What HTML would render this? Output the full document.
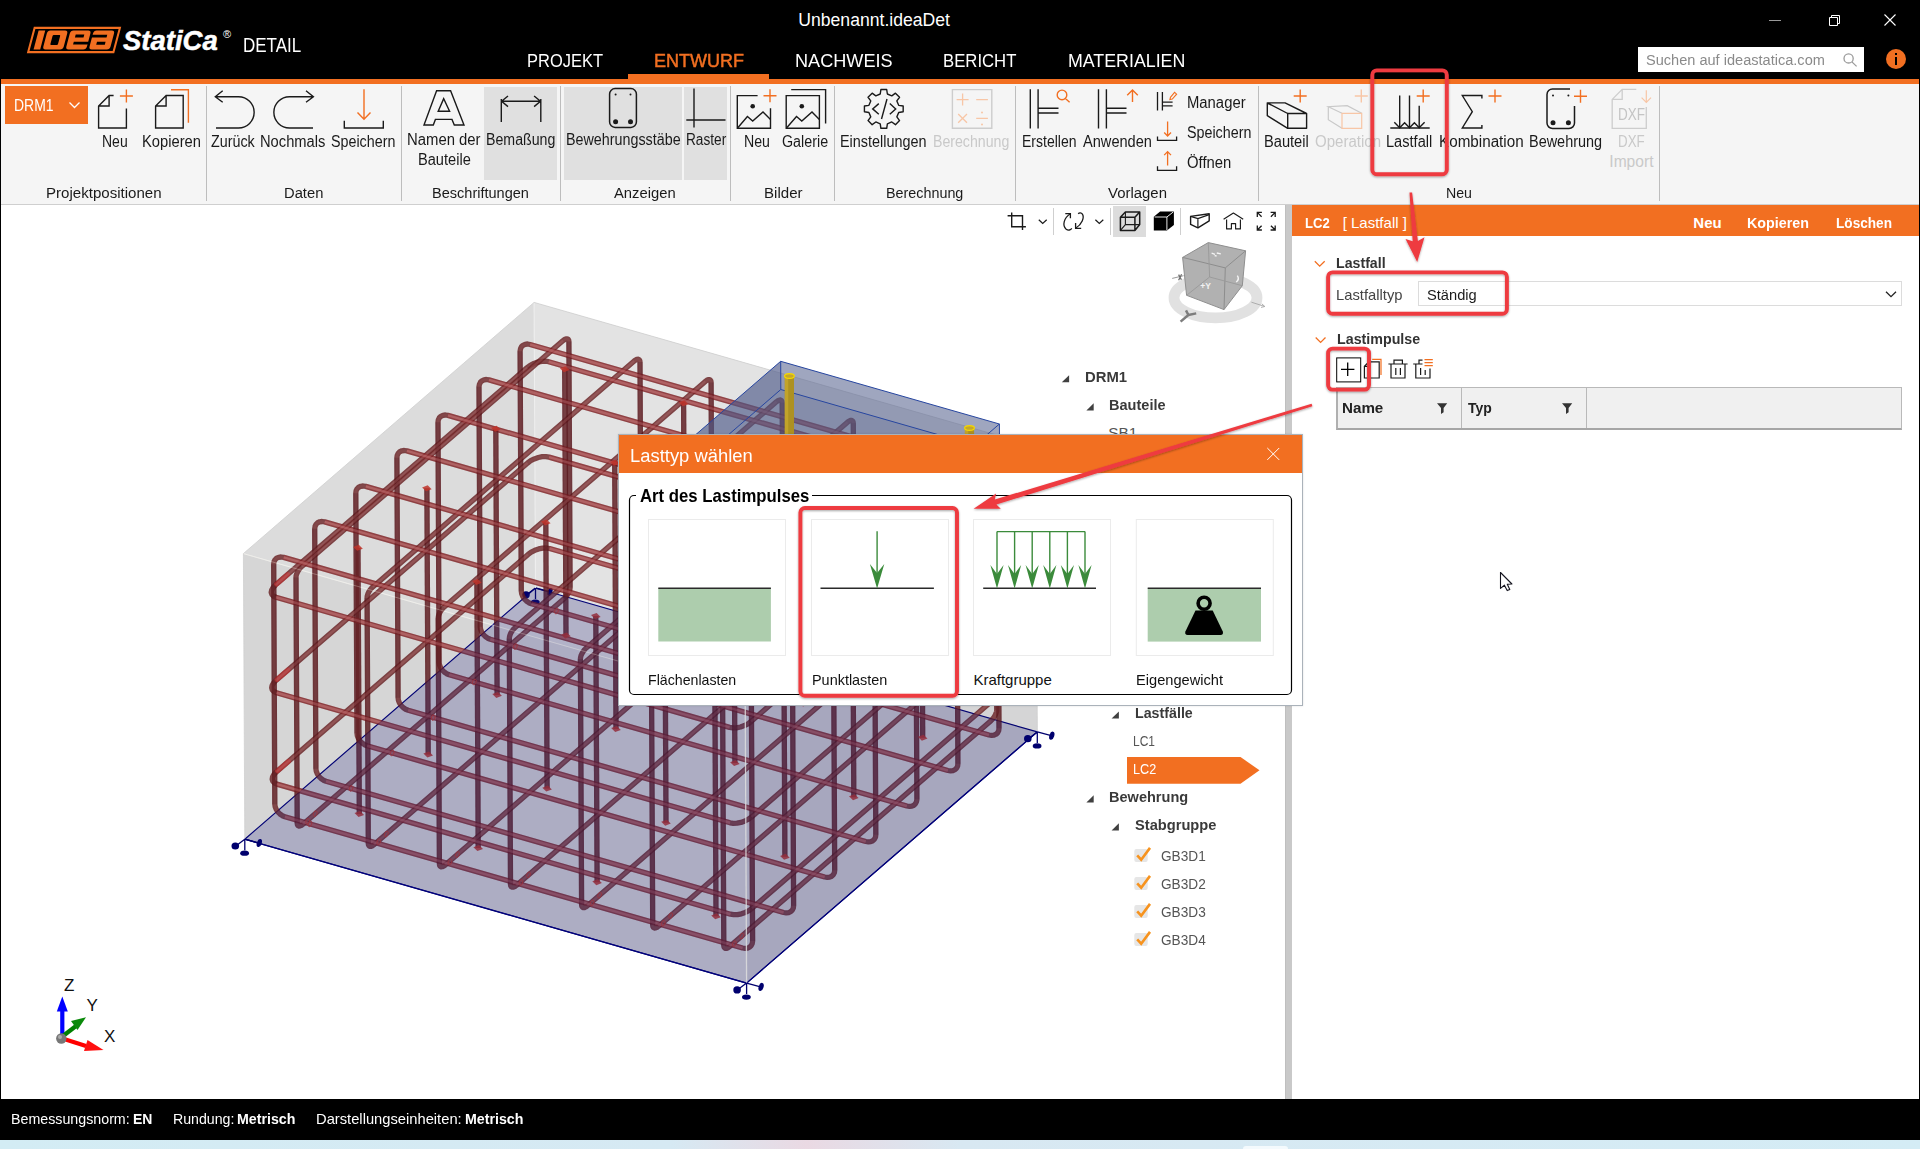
<!DOCTYPE html><html><head><meta charset="utf-8"><title>IDEA StatiCa Detail</title><style>
html,body{margin:0;padding:0;}
body{width:1920px;height:1149px;overflow:hidden;position:relative;background:#fff;
 font-family:"Liberation Sans",sans-serif;color:#1a1a1a;}
.abs{position:absolute;}
.t{position:absolute;white-space:nowrap;line-height:1;}
.c{position:absolute;white-space:nowrap;line-height:1;transform:translateX(-50%);text-align:center;}
svg{position:absolute;overflow:visible;}
.rl{font-size:15.5px;color:#1a1a1a;}
.gl{font-size:15px;color:#1a1a1a;}
.dis{color:#c9c9c9;}
.sep{position:absolute;width:1px;background:#bdbdbd;top:86px;height:115px;}
.b{font-weight:bold;}
.tree{font-size:15.5px;color:#3a3a3a;}
</style></head><body>
<div class="abs" style="left:0;top:0;width:1920px;height:79px;background:#000"></div>
<div class="abs" style="left:0;top:79px;width:1920px;height:5px;background:#f26f21"></div>
<div class="abs" style="left:0;top:84px;width:1920px;height:120px;background:#f5f5f5"></div>
<div class="abs" style="left:0;top:204px;width:1920px;height:1px;background:#cfcfcf"></div>
<div class="abs" style="left:0;top:79px;width:1px;height:1070px;background:#000"></div>
<div class="abs" style="left:1919px;top:79px;width:1px;height:1070px;background:#000"></div>
<div class="abs" style="left:1285px;top:205px;width:7px;height:894px;background:#c9c9c9"></div>
<div class="abs" style="left:1285px;top:205px;width:1px;height:894px;background:#bfbfbf"></div>
<div class="abs" style="left:0;top:1099px;width:1920px;height:41px;background:#000"></div>
<div class="abs" style="left:0;top:1140px;width:1920px;height:9px;background:linear-gradient(90deg,#d3ecf4 0%,#d6e9f3 35%,#ead9e3 42%,#d8e8f2 50%,#d4ecf5 100%)"></div>
<div class="abs" style="left:1243px;top:1146px;width:45px;height:3px;border-radius:3px 3px 0 0;background:#f4fafd"></div>
<svg style="left:0px;top:0px" width="130" height="79" viewBox="0 0 130 79" ><g transform="translate(0,53) skewX(-15) translate(0,-53)"><rect x="27.9" y="27.9" width="85.3" height="24.2" fill="#000" stroke="#f26f21" stroke-width="2.1"/><rect x="32.6" y="30.6" width="6.6" height="18.8" fill="#f26f21"/><rect x="41.6" y="30.6" width="20.4" height="18.8" rx="3" fill="#f26f21"/><rect x="48" y="35" width="7.6" height="10" rx="1" fill="#000"/><rect x="64.6" y="30.6" width="20.6" height="18.8" rx="3" fill="#f26f21"/><rect x="70.8" y="34.6" width="8.6" height="3" fill="#000"/><rect x="70.8" y="41.8" width="15" height="2.8" fill="#000"/><rect x="87.8" y="30.6" width="21" height="18.8" rx="3" fill="#f26f21"/><rect x="87" y="34.8" width="15.4" height="2.8" fill="#000"/><rect x="94" y="41.8" width="8.6" height="3" fill="#000"/></g></svg>
<div class="t" style="left:123.00px;top:27.16px;font-size:27.5px;color:#fff;font-weight:bold;font-style:italic;-webkit-text-stroke:0.5px #fff;">StatiCa</div>
<div class="t" style="left:223.00px;top:29.36px;font-size:11px;color:#fff;">®</div>
<div class="t" style="left:242.70px;top:35.89px;font-size:19.4px;color:#fff;transform:scaleX(0.8769);transform-origin:0 0;">DETAIL</div>
<div class="t" style="left:798.30px;top:11.88px;font-size:17.6px;color:#fff;">Unbenannt.ideaDet</div>
<div class="t" style="left:526.70px;top:51.22px;font-size:19px;color:#fff;transform:scaleX(0.8674);transform-origin:0 0;">PROJEKT</div>
<div class="t" style="left:653.70px;top:51.22px;font-size:19px;color:#f26f21;transform:scaleX(0.9475);transform-origin:0 0;-webkit-text-stroke:0.5px #f26f21;">ENTWURF</div>
<div class="t" style="left:794.70px;top:51.22px;font-size:19px;color:#fff;transform:scaleX(0.9532);transform-origin:0 0;">NACHWEIS</div>
<div class="t" style="left:943.30px;top:51.22px;font-size:19px;color:#fff;transform:scaleX(0.8802);transform-origin:0 0;">BERICHT</div>
<div class="t" style="left:1067.70px;top:51.22px;font-size:19px;color:#fff;transform:scaleX(0.9363);transform-origin:0 0;">MATERIALIEN</div>
<div class="abs" style="left:628px;top:74px;width:141px;height:6px;background:#f26f21"></div>
<div class="abs" style="left:1638px;top:47px;width:226px;height:25px;background:#fff"></div>
<div class="t" style="left:1645.50px;top:52.38px;font-size:15.2px;color:#8a8a8a;transform:scaleX(0.9586);transform-origin:0 0;">Suchen auf ideastatica.com</div>
<svg style="left:1840px;top:50px" width="20" height="20" viewBox="0 0 20 20" ><path d="M13.2 8.4a4.6 4.6 0 1 1-9.2 0a4.6 4.6 0 1 1 9.2 0zM11.9 11.9L16.6 16.4" stroke="#9a9a9a" stroke-width="1.3" fill="none" /></svg>
<div class="abs" style="left:1886px;top:49px;width:20px;height:20px;border-radius:10px;background:#f26f21"></div>
<div class="abs" style="left:1895px;top:56.5px;width:2.4px;height:8px;background:#000"></div>
<div class="abs" style="left:1895px;top:53px;width:2.4px;height:2.4px;background:#000"></div>
<svg style="left:1760px;top:8px" width="150" height="24" viewBox="0 0 150 24" ><path d="M9 12.5H21" stroke="#9a9a9a" stroke-width="1" fill="none" /><path d="M69.5 9.5H77.5V17.5H69.5zM71.5 9.5V7.5H79.5V15.5H77.5" stroke="#fff" stroke-width="1" fill="none" /><path d="M124.5 6.5L135.5 17.5M135.5 6.5L124.5 17.5" stroke="#fff" stroke-width="1.1" fill="none" /></svg>
<div class="abs" style="left:484px;top:87px;width:73px;height:93px;background:#e0e0e0"></div>
<div class="abs" style="left:564px;top:87px;width:118px;height:93px;background:#e0e0e0"></div>
<div class="abs" style="left:684px;top:87px;width:43px;height:93px;background:#e0e0e0"></div>
<div class="sep" style="left:206px"></div>
<div class="sep" style="left:401px"></div>
<div class="sep" style="left:560px"></div>
<div class="sep" style="left:730px"></div>
<div class="sep" style="left:834px"></div>
<div class="sep" style="left:1015px"></div>
<div class="sep" style="left:1258px"></div>
<div class="sep" style="left:1659px"></div>
<div class="abs" style="left:5px;top:86px;width:83px;height:38px;background:#f26f21"></div>
<div class="t" style="left:13.50px;top:97.71px;font-size:16px;color:#fff;transform:scaleX(0.8713);transform-origin:0 0;">DRM1</div>
<svg style="left:0px;top:0px" width="1920" height="210" viewBox="0 0 1920 210" ><path d="M69.5 102.5L74.5 107.5L79.5 102.5" stroke="#fff" stroke-width="1.3" fill="none" /><path d="M113.6 95.5H109.1L98.6 106.0V128H126.4V108.5M109.1 95.5V106.0H98.6" stroke="#1a1a1a" stroke-width="1.4" fill="none" stroke-linejoin="miter"/><path d="M119.9 96H132.9M126.4 89.5V102.5" stroke="#f26f21" stroke-width="1.4" fill="none" /><path d="M166.1 95.5L155.6 106.0V128H183.2V95.5ZM166.1 95.5V106.0H155.6" stroke="#1a1a1a" stroke-width="1.4" fill="none" stroke-linejoin="miter"/><path d="M171 89.8H188.4V122.7" stroke="#f26f21" stroke-width="1.4" fill="none" /><path d="M222.7 90.7L215.3 96.7L222.7 102.3M215.3 96.7H238.5A15.65 15.65 0 0 1 238.5 128H216" stroke="#1a1a1a" stroke-width="1.4" fill="none" /><path d="M306 90.7L313.4 96.7L306 102.3M313.4 96.7H289.5A15.65 15.65 0 0 0 289.5 128H313" stroke="#1a1a1a" stroke-width="1.4" fill="none" /><path d="M344.3 120.7V128H383.3V120.7" stroke="#1a1a1a" stroke-width="1.4" fill="none" /><path d="M364 89.3V119.3M357.5 112.5L364 119.3L370.5 112.5" stroke="#f26f21" stroke-width="1.4" fill="none" /><path d="M436.6 90.7H450.6L464 125H454.3L452 119.4H435.4L433.3 125H424ZM443.7 98.6L438.2 111.2H449.6Z" stroke="#1a1a1a" stroke-width="1.4" fill="none" stroke-linejoin="miter"/><path d="M501.3 99V122M540.8 99V122M501.3 101.3H540.8M508 96L501.6 101.3L508 106.6M534.1 96L540.5 101.3L534.1 106.6" stroke="#1a1a1a" stroke-width="1.4" fill="none" /><rect x="609.6" y="88.6" width="26.8" height="38.8" rx="5.5" fill="none" stroke="#1a1a1a" stroke-width="1.5"/><circle cx="615.6" cy="94.4" r="1" fill="#1a1a1a"/><circle cx="615.6" cy="121.7" r="2.5" fill="#1a1a1a"/><circle cx="630.5" cy="94.4" r="1" fill="#1a1a1a"/><circle cx="630.5" cy="121.7" r="2.5" fill="#1a1a1a"/><path d="M694 88.4V127.4M686.3 120H725.5" stroke="#1a1a1a" stroke-width="1.4" fill="none" /><path d="M757.6 95.6H737.3V128.3H770.5V108.2" stroke="#1a1a1a" stroke-width="1.4" fill="none" /><path d="M737.6 128L747.4 116.5L752.7 121L763 112L770.5 119.5" stroke="#1a1a1a" stroke-width="1.4" fill="none" /><circle cx="752.7" cy="106.2" r="2.3" fill="#1a1a1a"/><path d="M763.5 95.8H776.5M770 89.3V102.3" stroke="#f26f21" stroke-width="1.4" fill="none" /><path d="M786.2 95.6H819.4V128.3H786.2Z" stroke="#1a1a1a" stroke-width="1.4" fill="none" /><path d="M786.5 128L796.5 116.5L801.8 121L812 112L819.4 119.5" stroke="#1a1a1a" stroke-width="1.4" fill="none" /><circle cx="801.8" cy="106.2" r="2.3" fill="#1a1a1a"/><path d="M791.2 89.6H825.6V123.6" stroke="#1a1a1a" stroke-width="1.4" fill="none" /><path d="M880.23 94.02L880.90 89.52L886.70 89.52L887.37 94.02L891.79 95.85L895.46 93.14L899.56 97.24L896.85 100.91L898.68 105.33L903.18 106.00L903.18 111.80L898.68 112.47L896.85 116.89L899.56 120.56L895.46 124.66L891.79 121.95L887.37 123.78L886.70 128.28L880.90 128.28L880.23 123.78L875.81 121.95L872.14 124.66L868.04 120.56L870.75 116.89L868.92 112.47L864.42 111.80L864.42 106.00L868.92 105.33L870.75 100.91L868.04 97.24L872.14 93.14L875.81 95.85Z" stroke="#1a1a1a" stroke-width="1.4" fill="none" stroke-linejoin="round"/><path d="M878.8 103.6L872.7 108.9L878.8 114.2M887 99L881.5 119M889.8 103.6L895.7 108.9L889.8 114.2" stroke="#1a1a1a" stroke-width="1.4" fill="none" /><path d="M952.4 89.6H991.8V128.3H952.4Z" stroke="#cdcdcd" stroke-width="1.4" fill="none" /><path d="M956.6 99.6H968.6M962.6 93.6V105.6M976.2 99.6H987.9M958.2 114L967 122.8M967 114L958.2 122.8M976.2 118.4H987.9" stroke="#f8c6a6" stroke-width="1.3" fill="none" /><circle cx="982" cy="112.4" r="1" fill="#f8c6a6"/><circle cx="982" cy="124.4" r="1" fill="#f8c6a6"/><path d="M1030.3 89.3V128.6M1038.1 89.3V128.6M1038.1 108.2H1058.5M1038.1 113H1058.5" stroke="#1a1a1a" stroke-width="1.4" fill="none" /><path d="M1066.8 94.9a4.8 4.8 0 1 1 -9.6 0a4.8 4.8 0 1 1 9.6 0zM1065.4 98.4L1069.6 102.2" stroke="#f26f21" stroke-width="1.4" fill="none" /><path d="M1098.5 89.3V128.6M1106.4 89.3V128.6M1106.4 108.2H1126.5M1106.4 113H1126.5" stroke="#1a1a1a" stroke-width="1.4" fill="none" /><path d="M1132.5 102.1V89.9M1127.2 95.2L1132.5 89.9L1137.8 95.2" stroke="#f26f21" stroke-width="1.4" fill="none" /><path d="M1157.5 91.9V110.4M1162.4 91.9V110.4M1162.4 102.1H1172.6M1162.4 105.9H1172.6" stroke="#1a1a1a" stroke-width="1.3" fill="none" /><path d="M1170.4 97.4L1174.6 92.4L1176.6 94.2L1172.3 99L1169.9 99.6Z" stroke="#f26f21" stroke-width="1.1" fill="none" /><path d="M1157.5 136.4V140.3H1176.6V136.4" stroke="#1a1a1a" stroke-width="1.3" fill="none" /><path d="M1167.6 121.5V136M1164.2 132.5L1167.6 136L1171 132.5" stroke="#f26f21" stroke-width="1.3" fill="none" /><path d="M1157.5 166.3V170.4H1176.6V166.3" stroke="#1a1a1a" stroke-width="1.3" fill="none" /><path d="M1167.6 165.6V151.6M1164.2 155.1L1167.6 151.6L1171 155.1" stroke="#f26f21" stroke-width="1.3" fill="none" /><path d="M1287.7 113.5H1306.6V128.3H1287.7ZM1287.7 113.5L1267.3 102.9H1285.1L1306.6 113.5M1267.3 102.9V115.7L1287.7 128.3" stroke="#1a1a1a" stroke-width="1.4" fill="none" stroke-linejoin="round"/><path d="M1293.7 96H1306.7M1300.2 89.5V102.5" stroke="#f26f21" stroke-width="1.4" fill="none" /><path d="M1342 113.3L1328.3 106.7L1347.2 105.6L1361.7 113.3M1328.3 106.7V119.7L1342 128.3" stroke="#c9c9c9" stroke-width="1.2" fill="none" /><path d="M1342 113.3H1361.7V128.3H1342Z" stroke="#f8c6a6" stroke-width="1.2" fill="none" /><path d="M1354.8 96H1367.8M1361.3 89.5V102.5" stroke="#f8c6a6" stroke-width="1.4" fill="none" /><path d="M1399.7 95.5V128M1409.5 95.5V128M1419.2 105.7V128M1390.3 128H1429.7" stroke="#1a1a1a" stroke-width="1.4" fill="none" /><path d="M1394.3 122.3L1399.7 127.8L1404.6 122.8L1409.5 127.8L1414.4 122.8L1419.2 127.8L1424.6 122.3" stroke="#1a1a1a" stroke-width="1.4" fill="none" stroke-linejoin="miter"/><path d="M1416.7 96H1429.7M1423.2 89.5V102.5" stroke="#f26f21" stroke-width="1.4" fill="none" /><path d="M1481.9 98.6V95.5H1462.3L1472.3 111.7L1462.3 128H1481.9V124.9" stroke="#1a1a1a" stroke-width="1.4" fill="none" stroke-linejoin="miter"/><path d="M1488.5 96H1501.5M1495 89.5V102.5" stroke="#f26f21" stroke-width="1.4" fill="none" /><path d="M1570 88.9H1552.5A5.5 5.5 0 0 0 1547 94.4V123A5.5 5.5 0 0 0 1552.5 128.5H1569A5.5 5.5 0 0 0 1574.5 123V106" stroke="#1a1a1a" stroke-width="1.5" fill="none" /><circle cx="1553" cy="95.5" r="1" fill="#1a1a1a"/><circle cx="1553" cy="122.7" r="2.5" fill="#1a1a1a"/><circle cx="1568.4" cy="95.5" r="1" fill="#1a1a1a"/><circle cx="1568.4" cy="122.7" r="2.5" fill="#1a1a1a"/><path d="M1574.0 96.3H1587.0M1580.5 89.8V102.8" stroke="#f26f21" stroke-width="1.4" fill="none" /><path d="M1636.3 89.4H1622.2L1612.2 99.4V128.3H1646.3V107M1622.2 89.4V99.4H1612.2" stroke="#cdcdcd" stroke-width="1.3" fill="none" /><path d="M1646.3 90.2V102.3M1641.6 97.6L1646.3 102.3L1651 97.6" stroke="#f8c6a6" stroke-width="1.2" fill="none" /></svg>
<div class="t" style="left:1617.50px;top:106.18px;font-size:17px;color:#c4c4c4;transform:scaleX(0.7941);transform-origin:0 0;">DXF</div>
<div class="t" style="left:102.30px;top:133.74px;font-size:15.6px;color:#1a1a1a;transform:scaleX(0.8979);transform-origin:0 0;">Neu</div>
<div class="t" style="left:141.70px;top:133.74px;font-size:15.6px;color:#1a1a1a;transform:scaleX(0.9447);transform-origin:0 0;">Kopieren</div>
<div class="t" style="left:211.30px;top:133.74px;font-size:15.6px;color:#1a1a1a;transform:scaleX(0.9166);transform-origin:0 0;">Zurück</div>
<div class="t" style="left:260.30px;top:133.74px;font-size:15.6px;color:#1a1a1a;transform:scaleX(0.9429);transform-origin:0 0;">Nochmals</div>
<div class="t" style="left:331.30px;top:133.74px;font-size:15.6px;color:#1a1a1a;transform:scaleX(0.9167);transform-origin:0 0;">Speichern</div>
<div class="t" style="left:407.40px;top:131.94px;font-size:15.6px;color:#1a1a1a;transform:scaleX(0.9537);transform-origin:0 0;">Namen der</div>
<div class="t" style="left:417.70px;top:151.74px;font-size:15.6px;color:#1a1a1a;transform:scaleX(0.9365);transform-origin:0 0;">Bauteile</div>
<div class="t" style="left:485.90px;top:131.94px;font-size:15.6px;color:#1a1a1a;transform:scaleX(0.9094);transform-origin:0 0;">Bemaßung</div>
<div class="t" style="left:565.60px;top:131.94px;font-size:15.6px;color:#1a1a1a;transform:scaleX(0.9184);transform-origin:0 0;">Bewehrungsstäbe</div>
<div class="t" style="left:685.60px;top:131.94px;font-size:15.6px;color:#1a1a1a;transform:scaleX(0.8749);transform-origin:0 0;">Raster</div>
<div class="t" style="left:743.60px;top:133.74px;font-size:15.6px;color:#1a1a1a;transform:scaleX(0.9084);transform-origin:0 0;">Neu</div>
<div class="t" style="left:782.40px;top:133.74px;font-size:15.6px;color:#1a1a1a;transform:scaleX(0.9167);transform-origin:0 0;">Galerie</div>
<div class="t" style="left:839.80px;top:133.74px;font-size:15.6px;color:#1a1a1a;transform:scaleX(0.9244);transform-origin:0 0;">Einstellungen</div>
<div class="t" style="left:933.20px;top:133.74px;font-size:15.6px;color:#c9c9c9;transform:scaleX(0.9069);transform-origin:0 0;">Berechnung</div>
<div class="t" style="left:1021.80px;top:133.74px;font-size:15.6px;color:#1a1a1a;transform:scaleX(0.8979);transform-origin:0 0;">Erstellen</div>
<div class="t" style="left:1082.70px;top:133.74px;font-size:15.6px;color:#1a1a1a;transform:scaleX(0.9358);transform-origin:0 0;">Anwenden</div>
<div class="t" style="left:1187.20px;top:94.64px;font-size:15.6px;color:#1a1a1a;transform:scaleX(0.9518);transform-origin:0 0;">Manager</div>
<div class="t" style="left:1187.20px;top:124.74px;font-size:15.6px;color:#1a1a1a;transform:scaleX(0.9167);transform-origin:0 0;">Speichern</div>
<div class="t" style="left:1187.20px;top:154.64px;font-size:15.6px;color:#1a1a1a;transform:scaleX(0.9518);transform-origin:0 0;">Öffnen</div>
<div class="t" style="left:1263.50px;top:133.74px;font-size:15.6px;color:#1a1a1a;transform:scaleX(0.9391);transform-origin:0 0;">Bauteil</div>
<div class="t" style="left:1314.50px;top:133.74px;font-size:15.6px;color:#c9c9c9;transform:scaleX(0.9648);transform-origin:0 0;">Operation</div>
<div class="t" style="left:1386.00px;top:133.74px;font-size:15.6px;color:#1a1a1a;transform:scaleX(0.9367);transform-origin:0 0;">Lastfall</div>
<div class="t" style="left:1438.80px;top:133.74px;font-size:15.6px;color:#1a1a1a;transform:scaleX(0.9766);transform-origin:0 0;">Kombination</div>
<div class="t" style="left:1529.30px;top:133.74px;font-size:15.6px;color:#1a1a1a;transform:scaleX(0.9262);transform-origin:0 0;">Bewehrung</div>
<div class="t" style="left:1618.30px;top:133.74px;font-size:15.6px;color:#c9c9c9;transform:scaleX(0.8557);transform-origin:0 0;">DXF</div>
<div class="t" style="left:1609.30px;top:153.64px;font-size:15.6px;color:#c9c9c9;">Import</div>
<div class="t" style="left:46.00px;top:185.08px;font-size:15.2px;color:#1a1a1a;transform:scaleX(0.9923);transform-origin:0 0;">Projektpositionen</div>
<div class="t" style="left:284.30px;top:185.08px;font-size:15.2px;color:#1a1a1a;transform:scaleX(0.9714);transform-origin:0 0;">Daten</div>
<div class="t" style="left:432.30px;top:185.08px;font-size:15.2px;color:#1a1a1a;transform:scaleX(0.9567);transform-origin:0 0;">Beschriftungen</div>
<div class="t" style="left:614.30px;top:185.08px;font-size:15.2px;color:#1a1a1a;transform:scaleX(0.9735);transform-origin:0 0;">Anzeigen</div>
<div class="t" style="left:763.70px;top:185.08px;font-size:15.2px;color:#1a1a1a;transform:scaleX(0.9934);transform-origin:0 0;">Bilder</div>
<div class="t" style="left:886.30px;top:185.08px;font-size:15.2px;color:#1a1a1a;transform:scaleX(0.9443);transform-origin:0 0;">Berechnung</div>
<div class="t" style="left:1107.70px;top:185.08px;font-size:15.2px;color:#1a1a1a;transform:scaleX(0.9833);transform-origin:0 0;">Vorlagen</div>
<div class="t" style="left:1445.70px;top:185.08px;font-size:15.2px;color:#1a1a1a;transform:scaleX(0.9325);transform-origin:0 0;">Neu</div>
<svg style="left:0px;top:0px" width="1284" height="1099" viewBox="0 0 1284 1099" ><path d="M243.4 553.6L534.1 302.4L1035.9 446.3L1037.3 731.9L746.6 983.1L244.8 839.2Z" fill="#dcdcdc" stroke="none" stroke-width="1" /><path d="M534.1 302.4L1035.9 446.3L1037.3 731.9L535.5 588.0Z" fill="#e3e3e3" stroke="none" stroke-width="1" /><path d="M244.8 839.2L746.6 983.1L1037.3 731.9L535.5 588.0Z" fill="#e9e9e9" stroke="#00007a" stroke-width="1.2" stroke-linejoin="round"/><path d="M535.5 588.0V599.0M535.5 588.0L527.5 594.0M535.5 588.0L548.5 591.5" stroke="#00006e" stroke-width="1.3" fill="none" /><ellipse cx="526.0" cy="594.8" rx="3.8" ry="3.6" fill="#00006e"/><ellipse cx="535.3" cy="602.0" rx="4.4" ry="2.6" fill="#00006e"/><ellipse cx="550.0" cy="591.8" rx="2.4" ry="4.2" fill="#00006e" transform="rotate(18 550.0 591.8)"/><path d="M244.8 839.2L746.6 983.1L745.2 697.5L243.4 553.6Z" fill="rgba(0,0,0,0.022)" stroke="none" stroke-width="1" /><path d="M746.6 983.1L1037.3 731.9L1035.9 446.3L745.2 697.5Z" fill="rgba(0,0,20,0.06)" stroke="none" stroke-width="1" /><path d="M243.4 553.6L745.2 697.5" stroke="rgba(255,255,255,0.6)" stroke-width="1" fill="none" /><path d="M745.2 697.5L1035.9 446.3" stroke="rgba(255,255,255,0.6)" stroke-width="1" fill="none" /><path d="M535.5 588.0L534.1 302.4" stroke="rgba(240,240,240,0.9)" stroke-width="1.1" fill="none" /><path d="M243.4 553.6L534.1 302.4" stroke="#cfcfcf" stroke-width="0.8" fill="none" /><path d="M534.1 302.4L1035.9 446.3" stroke="#cfcfcf" stroke-width="0.8" fill="none" /><path d="M244.8 839.2L243.4 553.6" stroke="#cfcfcf" stroke-width="0.8" fill="none" /><path d="M1037.3 731.9L1035.9 446.3" stroke="#cfcfcf" stroke-width="0.8" fill="none" /><path d="M274.8 804.2L275.2 806.8L276.2 809.4L277.8 811.9L279.9 814.0L282.3 815.7L284.9 816.7L742.6 948.0L745.2 948.4L747.6 948.1L749.6 947.2L751.2 945.6L752.2 943.6L752.6 941.1L751.4 701.2L751.0 698.6L750.0 696.0L748.4 693.5L746.3 691.4L743.9 689.7L741.3 688.7L283.7 557.4L281.1 557.0L278.6 557.3L276.6 558.2L275.0 559.8L274.0 561.8L273.7 564.3Z" fill="none" stroke="rgba(100,28,30,0.8)" stroke-width="5.3" stroke-linejoin="round" stroke-linecap="butt"/><path d="M315.9 768.7L316.3 771.3L317.3 773.9L318.9 776.4L321.0 778.5L323.4 780.2L326.0 781.2L783.6 912.5L786.2 912.9L788.7 912.6L790.7 911.7L792.3 910.1L793.3 908.1L793.6 905.7L792.5 665.8L792.1 663.1L791.1 660.5L789.5 658.0L787.4 655.9L785.0 654.2L782.4 653.2L324.7 521.9L322.1 521.5L319.7 521.8L317.6 522.7L316.1 524.3L315.1 526.3L314.7 528.8Z" fill="none" stroke="rgba(100,28,30,0.8)" stroke-width="5.3" stroke-linejoin="round" stroke-linecap="butt"/><path d="M357.0 733.2L357.3 735.8L358.4 738.4L360.0 740.9L362.1 743.0L364.5 744.7L367.1 745.8L824.7 877.0L827.3 877.4L829.7 877.1L831.8 876.2L833.4 874.6L834.4 872.6L834.7 870.2L833.5 630.3L833.2 627.6L832.2 625.0L830.6 622.5L828.5 620.4L826.0 618.7L823.4 617.7L365.8 486.4L363.2 486.0L360.8 486.3L358.7 487.2L357.1 488.8L356.1 490.8L355.8 493.3Z" fill="none" stroke="rgba(100,28,30,0.8)" stroke-width="5.3" stroke-linejoin="round" stroke-linecap="butt"/><path d="M398.1 697.7L398.4 700.3L399.4 702.9L401.0 705.4L403.1 707.5L405.6 709.2L408.2 710.3L865.8 841.5L868.4 841.9L870.8 841.6L872.9 840.7L874.5 839.1L875.5 837.1L875.8 834.7L874.6 594.8L874.3 592.1L873.2 589.5L871.6 587.1L869.5 584.9L867.1 583.2L864.5 582.2L406.9 450.9L404.3 450.5L401.9 450.8L399.8 451.7L398.2 453.3L397.2 455.4L396.9 457.8Z" fill="none" stroke="rgba(100,28,30,0.8)" stroke-width="5.3" stroke-linejoin="round" stroke-linecap="butt"/><path d="M439.1 662.2L439.5 664.8L440.5 667.4L442.1 669.9L444.2 672.0L446.6 673.7L449.2 674.8L906.9 806.0L909.5 806.4L911.9 806.1L914.0 805.2L915.5 803.6L916.5 801.6L916.9 799.2L915.7 559.3L915.3 556.7L914.3 554.0L912.7 551.6L910.6 549.4L908.2 547.8L905.6 546.7L448.0 415.4L445.4 415.0L442.9 415.3L440.9 416.3L439.3 417.8L438.3 419.9L438.0 422.3Z" fill="none" stroke="rgba(100,28,30,0.8)" stroke-width="5.3" stroke-linejoin="round" stroke-linecap="butt"/><path d="M480.2 626.7L480.6 629.3L481.6 631.9L483.2 634.4L485.3 636.5L487.7 638.2L490.3 639.3L947.9 770.5L950.5 770.9L953.0 770.6L955.0 769.7L956.6 768.1L957.6 766.1L957.9 763.7L956.8 523.8L956.4 521.2L955.4 518.5L953.8 516.1L951.7 513.9L949.3 512.3L946.7 511.2L489.0 379.9L486.4 379.5L484.0 379.8L482.0 380.8L480.4 382.3L479.4 384.4L479.0 386.8Z" fill="none" stroke="rgba(100,28,30,0.8)" stroke-width="5.3" stroke-linejoin="round" stroke-linecap="butt"/><path d="M521.3 591.2L521.7 593.8L522.7 596.4L524.3 598.9L526.4 601.0L528.8 602.7L531.4 603.8L989.0 735.0L991.6 735.4L994.0 735.2L996.1 734.2L997.7 732.7L998.7 730.6L999.0 728.2L997.8 488.3L997.5 485.7L996.5 483.0L994.9 480.6L992.8 478.4L990.4 476.8L987.8 475.7L530.1 344.5L527.5 344.0L525.1 344.3L523.0 345.3L521.4 346.8L520.5 348.9L520.1 351.3Z" fill="none" stroke="rgba(100,28,30,0.8)" stroke-width="5.3" stroke-linejoin="round" stroke-linecap="butt"/><path d="M297.2 823.2L297.4 824.6L297.9 825.6L298.9 826.0L300.1 825.9L301.5 825.3L303.0 824.2L564.3 598.4L565.8 596.9L567.2 595.1L568.4 593.1L569.4 591.0L569.9 589.1L570.1 587.4L568.9 341.6L568.7 340.2L568.1 339.3L567.2 338.8L566.0 338.9L564.6 339.5L563.1 340.6L301.7 566.5L300.2 568.0L298.8 569.8L297.6 571.8L296.7 573.8L296.1 575.8L296.0 577.5Z" fill="none" stroke="rgba(100,28,30,0.8)" stroke-width="5.3" stroke-linejoin="round" stroke-linecap="butt"/><path d="M368.3 843.6L368.5 845.0L369.1 846.0L370.0 846.4L371.2 846.3L372.6 845.7L374.1 844.6L635.4 618.8L636.9 617.3L638.3 615.5L639.5 613.5L640.5 611.4L641.0 609.5L641.2 607.8L640.0 362.0L639.8 360.6L639.2 359.7L638.3 359.2L637.1 359.3L635.7 359.9L634.2 361.0L372.8 586.9L371.3 588.4L369.9 590.2L368.7 592.2L367.8 594.2L367.2 596.2L367.1 597.9Z" fill="none" stroke="rgba(100,28,30,0.8)" stroke-width="5.3" stroke-linejoin="round" stroke-linecap="butt"/><path d="M439.4 864.0L439.6 865.4L440.2 866.4L441.1 866.8L442.3 866.7L443.7 866.1L445.2 865.0L706.5 639.2L708.1 637.7L709.5 635.9L710.7 633.9L711.6 631.8L712.1 629.9L712.3 628.2L711.1 382.4L710.9 381.0L710.3 380.1L709.4 379.6L708.2 379.7L706.8 380.3L705.3 381.4L443.9 607.2L442.4 608.8L441.0 610.6L439.8 612.6L438.9 614.6L438.4 616.5L438.2 618.3Z" fill="none" stroke="rgba(100,28,30,0.8)" stroke-width="5.3" stroke-linejoin="round" stroke-linecap="butt"/><path d="M510.5 884.4L510.7 885.8L511.3 886.7L512.2 887.2L513.4 887.1L514.8 886.5L516.3 885.4L777.7 659.6L779.2 658.1L780.6 656.2L781.8 654.3L782.7 652.2L783.2 650.3L783.4 648.5L782.2 402.8L782.0 401.4L781.4 400.5L780.5 400.0L779.3 400.1L777.9 400.7L776.4 401.8L515.1 627.6L513.5 629.1L512.1 631.0L510.9 632.9L510.0 635.0L509.5 636.9L509.3 638.7Z" fill="none" stroke="rgba(100,28,30,0.8)" stroke-width="5.3" stroke-linejoin="round" stroke-linecap="butt"/><path d="M581.6 904.8L581.8 906.2L582.4 907.1L583.3 907.6L584.5 907.5L585.9 906.9L587.4 905.8L848.8 680.0L850.3 678.5L851.7 676.6L852.9 674.6L853.8 672.6L854.4 670.7L854.5 668.9L853.3 423.2L853.1 421.8L852.5 420.8L851.6 420.4L850.4 420.5L849.0 421.1L847.5 422.2L586.2 648.0L584.7 649.5L583.3 651.3L582.1 653.3L581.1 655.4L580.6 657.3L580.4 659.1Z" fill="none" stroke="rgba(100,28,30,0.8)" stroke-width="5.3" stroke-linejoin="round" stroke-linecap="butt"/><path d="M652.7 925.2L652.9 926.6L653.5 927.5L654.4 928.0L655.6 927.9L657.0 927.3L658.5 926.2L919.9 700.3L921.4 698.8L922.8 697.0L924.0 695.0L924.9 693.0L925.5 691.0L925.6 689.3L924.4 443.6L924.2 442.2L923.6 441.2L922.7 440.8L921.5 440.9L920.1 441.5L918.6 442.6L657.3 668.4L655.8 669.9L654.4 671.7L653.2 673.7L652.2 675.8L651.7 677.7L651.5 679.4Z" fill="none" stroke="rgba(100,28,30,0.8)" stroke-width="5.3" stroke-linejoin="round" stroke-linecap="butt"/><path d="M723.8 945.6L724.0 947.0L724.6 947.9L725.5 948.4L726.7 948.3L728.1 947.7L729.6 946.6L991.0 720.7L992.5 719.2L993.9 717.4L995.1 715.4L996.0 713.4L996.6 711.4L996.8 709.7L995.5 464.0L995.3 462.6L994.8 461.6L993.8 461.2L992.6 461.3L991.2 461.9L989.7 463.0L728.4 688.8L726.9 690.3L725.5 692.1L724.3 694.1L723.3 696.2L722.8 698.1L722.6 699.8Z" fill="none" stroke="rgba(100,28,30,0.8)" stroke-width="5.3" stroke-linejoin="round" stroke-linecap="butt"/><path d="M276.3 771.9L274.0 774.4L272.6 776.8L272.2 779.2L272.8 781.3L274.4 783.0L276.9 784.1L730.5 914.2L733.7 914.7L737.5 914.6L741.4 913.8L745.3 912.4L748.9 910.6L752.0 908.3L1003.8 690.8L1006.1 688.3L1007.5 685.8L1007.9 683.5L1007.3 681.4L1005.7 679.7L1003.2 678.6L549.6 548.5L546.4 548.0L542.7 548.1L538.7 548.9L534.8 550.3L531.2 552.1L528.1 554.4Z" fill="none" stroke="rgba(100,28,30,0.8)" stroke-width="5.3" stroke-linejoin="round" stroke-linecap="butt"/><path d="M275.9 680.5L273.5 683.0L272.1 685.5L271.7 687.8L272.3 689.9L274.0 691.6L276.5 692.7L730.1 822.8L733.3 823.3L737.0 823.2L741.0 822.4L744.9 821.0L748.5 819.2L751.6 816.9L1003.3 599.4L1005.7 596.9L1007.1 594.4L1007.5 592.1L1006.9 590.0L1005.3 588.3L1002.8 587.2L549.1 457.1L545.9 456.6L542.2 456.7L538.3 457.5L534.3 458.9L530.7 460.7L527.6 463.0Z" fill="none" stroke="rgba(100,28,30,0.8)" stroke-width="5.3" stroke-linejoin="round" stroke-linecap="butt"/><path d="M275.4 585.1L273.1 587.6L271.7 590.1L271.2 592.4L271.9 594.5L273.5 596.2L276.0 597.3L729.6 727.4L732.8 727.9L736.5 727.8L740.5 727.0L744.4 725.6L748.0 723.8L751.1 721.5L1002.9 504.0L1005.2 501.6L1006.6 499.1L1007.0 496.7L1006.4 494.6L1004.8 492.9L1002.3 491.8L548.7 361.7L545.4 361.2L541.7 361.3L537.8 362.1L533.9 363.5L530.2 365.3L527.2 367.6Z" fill="none" stroke="rgba(100,28,30,0.8)" stroke-width="5.3" stroke-linejoin="round" stroke-linecap="butt"/><path d="M359.3 814.0L358.0 547.8" fill="none" stroke="rgba(100,28,30,0.8)" stroke-width="5.3" stroke-linejoin="round" stroke-linecap="butt"/><path d="M428.2 754.5L426.9 488.3" fill="none" stroke="rgba(100,28,30,0.8)" stroke-width="5.3" stroke-linejoin="round" stroke-linecap="butt"/><path d="M497.1 694.9L495.8 428.7" fill="none" stroke="rgba(100,28,30,0.8)" stroke-width="5.3" stroke-linejoin="round" stroke-linecap="butt"/><path d="M566.0 635.4L564.7 369.2" fill="none" stroke="rgba(100,28,30,0.8)" stroke-width="5.3" stroke-linejoin="round" stroke-linecap="butt"/><path d="M478.2 848.1L476.9 581.9" fill="none" stroke="rgba(100,28,30,0.8)" stroke-width="5.3" stroke-linejoin="round" stroke-linecap="butt"/><path d="M547.1 788.6L545.8 522.4" fill="none" stroke="rgba(100,28,30,0.8)" stroke-width="5.3" stroke-linejoin="round" stroke-linecap="butt"/><path d="M616.0 729.0L614.7 462.8" fill="none" stroke="rgba(100,28,30,0.8)" stroke-width="5.3" stroke-linejoin="round" stroke-linecap="butt"/><path d="M684.9 669.5L683.6 403.3" fill="none" stroke="rgba(100,28,30,0.8)" stroke-width="5.3" stroke-linejoin="round" stroke-linecap="butt"/><path d="M597.1 882.2L595.8 616.0" fill="none" stroke="rgba(100,28,30,0.8)" stroke-width="5.3" stroke-linejoin="round" stroke-linecap="butt"/><path d="M666.0 822.7L664.7 556.5" fill="none" stroke="rgba(100,28,30,0.8)" stroke-width="5.3" stroke-linejoin="round" stroke-linecap="butt"/><path d="M734.9 763.1L733.6 496.9" fill="none" stroke="rgba(100,28,30,0.8)" stroke-width="5.3" stroke-linejoin="round" stroke-linecap="butt"/><path d="M803.8 703.6L802.5 437.4" fill="none" stroke="rgba(100,28,30,0.8)" stroke-width="5.3" stroke-linejoin="round" stroke-linecap="butt"/><path d="M716.0 916.3L714.7 650.1" fill="none" stroke="rgba(100,28,30,0.8)" stroke-width="5.3" stroke-linejoin="round" stroke-linecap="butt"/><path d="M784.9 856.8L783.6 590.6" fill="none" stroke="rgba(100,28,30,0.8)" stroke-width="5.3" stroke-linejoin="round" stroke-linecap="butt"/><path d="M853.8 797.2L852.5 531.0" fill="none" stroke="rgba(100,28,30,0.8)" stroke-width="5.3" stroke-linejoin="round" stroke-linecap="butt"/><path d="M922.7 737.7L921.4 471.5" fill="none" stroke="rgba(100,28,30,0.8)" stroke-width="5.3" stroke-linejoin="round" stroke-linecap="butt"/><path d="M284.9 816.7L742.6 948.0M283.7 557.4L741.3 688.7M326.0 781.2L783.6 912.5M324.7 521.9L782.4 653.2M367.1 745.8L824.7 877.0M365.8 486.4L823.4 617.7M408.2 710.3L865.8 841.5M406.9 450.9L864.5 582.2M449.2 674.8L906.9 806.0M448.0 415.4L905.6 546.7M490.3 639.3L947.9 770.5M489.0 379.9L946.7 511.2M531.4 603.8L989.0 735.0M530.1 344.5L987.8 475.7M276.9 784.1L730.5 914.2M549.6 548.5L1003.2 678.6M276.5 692.7L730.1 822.8M549.1 457.1L1002.8 587.2M276.0 597.3L729.6 727.4M548.7 361.7L1002.3 491.8" fill="none" stroke="rgba(255,60,70,0.15)" stroke-width="5.3" stroke-linecap="butt"/><path d="M284.9 816.7L742.6 948.0M283.7 557.4L741.3 688.7M326.0 781.2L783.6 912.5M324.7 521.9L782.4 653.2M367.1 745.8L824.7 877.0M365.8 486.4L823.4 617.7M408.2 710.3L865.8 841.5M406.9 450.9L864.5 582.2M449.2 674.8L906.9 806.0M448.0 415.4L905.6 546.7M490.3 639.3L947.9 770.5M489.0 379.9L946.7 511.2M531.4 603.8L989.0 735.0M530.1 344.5L987.8 475.7M276.9 784.1L730.5 914.2M549.6 548.5L1003.2 678.6M276.5 692.7L730.1 822.8M549.1 457.1L1002.8 587.2M276.0 597.3L729.6 727.4M548.7 361.7L1002.3 491.8" fill="none" stroke="rgba(232,155,155,0.32)" stroke-width="2.5" stroke-linecap="butt"/><path d="M274.8 804.2L273.7 564.3M752.6 941.1L751.4 701.2M315.9 768.7L314.7 528.8M793.6 905.7L792.5 665.8M357.0 733.2L355.8 493.3M834.7 870.2L833.5 630.3M398.1 697.7L396.9 457.8M875.8 834.7L874.6 594.8M439.1 662.2L438.0 422.3M916.9 799.2L915.7 559.3M480.2 626.7L479.0 386.8M957.9 763.7L956.8 523.8M521.3 591.2L520.1 351.3M999.0 728.2L997.8 488.3M297.2 823.2L296.0 577.5M570.1 587.4L568.9 341.6M368.3 843.6L367.1 597.9M641.2 607.8L640.0 362.0M439.4 864.0L438.2 618.3M712.3 628.2L711.1 382.4M510.5 884.4L509.3 638.7M783.4 648.5L782.2 402.8M581.6 904.8L580.4 659.1M854.5 668.9L853.3 423.2M652.7 925.2L651.5 679.4M925.6 689.3L924.4 443.6M723.8 945.6L722.6 699.8M996.8 709.7L995.5 464.0M359.3 814.0L358.0 547.8M428.2 754.5L426.9 488.3M497.1 694.9L495.8 428.7M566.0 635.4L564.7 369.2M478.2 848.1L476.9 581.9M547.1 788.6L545.8 522.4M616.0 729.0L614.7 462.8M684.9 669.5L683.6 403.3M597.1 882.2L595.8 616.0M666.0 822.7L664.7 556.5M734.9 763.1L733.6 496.9M803.8 703.6L802.5 437.4M716.0 916.3L714.7 650.1M784.9 856.8L783.6 590.6M853.8 797.2L852.5 531.0M922.7 737.7L921.4 471.5" fill="none" stroke="rgba(50,5,20,0.2)" stroke-width="5.3" stroke-linecap="butt"/><path d="M277.5 770.9L288.5 761.4M277.0 679.5L288.1 670.0M276.6 584.1L287.6 574.6" fill="none" stroke="rgba(215,45,45,0.5)" stroke-width="5" stroke-linecap="round"/><path d="M303.0 824.2L564.3 598.4M301.7 566.5L563.1 340.6M374.1 844.6L635.4 618.8M372.8 586.9L634.2 361.0M445.2 865.0L706.5 639.2M443.9 607.2L705.3 381.4M516.3 885.4L777.7 659.6M515.1 627.6L776.4 401.8M587.4 905.8L848.8 680.0M586.2 648.0L847.5 422.2M658.5 926.2L919.9 700.3M657.3 668.4L918.6 442.6M729.6 946.6L991.0 720.7M728.4 688.8L989.7 463.0M276.3 771.9L528.1 554.4M752.0 908.3L1003.8 690.8M275.9 680.5L527.6 463.0M751.6 816.9L1003.3 599.4M275.4 585.1L527.2 367.6M751.1 721.5L1002.9 504.0" fill="none" stroke="rgba(228,150,150,0.17)" stroke-width="2.5" stroke-linecap="butt"/><path d="M274.8 804.2L275.2 806.8L276.2 809.4L277.8 811.9L279.9 814.0L282.3 815.7L284.9 816.7L742.6 948.0L745.2 948.4L747.6 948.1L749.6 947.2L751.2 945.6L752.2 943.6L752.6 941.1L751.4 701.2L751.0 698.6L750.0 696.0L748.4 693.5L746.3 691.4L743.9 689.7L741.3 688.7L283.7 557.4L281.1 557.0L278.6 557.3L276.6 558.2L275.0 559.8L274.0 561.8L273.7 564.3ZM315.9 768.7L316.3 771.3L317.3 773.9L318.9 776.4L321.0 778.5L323.4 780.2L326.0 781.2L783.6 912.5L786.2 912.9L788.7 912.6L790.7 911.7L792.3 910.1L793.3 908.1L793.6 905.7L792.5 665.8L792.1 663.1L791.1 660.5L789.5 658.0L787.4 655.9L785.0 654.2L782.4 653.2L324.7 521.9L322.1 521.5L319.7 521.8L317.6 522.7L316.1 524.3L315.1 526.3L314.7 528.8ZM357.0 733.2L357.3 735.8L358.4 738.4L360.0 740.9L362.1 743.0L364.5 744.7L367.1 745.8L824.7 877.0L827.3 877.4L829.7 877.1L831.8 876.2L833.4 874.6L834.4 872.6L834.7 870.2L833.5 630.3L833.2 627.6L832.2 625.0L830.6 622.5L828.5 620.4L826.0 618.7L823.4 617.7L365.8 486.4L363.2 486.0L360.8 486.3L358.7 487.2L357.1 488.8L356.1 490.8L355.8 493.3ZM398.1 697.7L398.4 700.3L399.4 702.9L401.0 705.4L403.1 707.5L405.6 709.2L408.2 710.3L865.8 841.5L868.4 841.9L870.8 841.6L872.9 840.7L874.5 839.1L875.5 837.1L875.8 834.7L874.6 594.8L874.3 592.1L873.2 589.5L871.6 587.1L869.5 584.9L867.1 583.2L864.5 582.2L406.9 450.9L404.3 450.5L401.9 450.8L399.8 451.7L398.2 453.3L397.2 455.4L396.9 457.8ZM439.1 662.2L439.5 664.8L440.5 667.4L442.1 669.9L444.2 672.0L446.6 673.7L449.2 674.8L906.9 806.0L909.5 806.4L911.9 806.1L914.0 805.2L915.5 803.6L916.5 801.6L916.9 799.2L915.7 559.3L915.3 556.7L914.3 554.0L912.7 551.6L910.6 549.4L908.2 547.8L905.6 546.7L448.0 415.4L445.4 415.0L442.9 415.3L440.9 416.3L439.3 417.8L438.3 419.9L438.0 422.3ZM480.2 626.7L480.6 629.3L481.6 631.9L483.2 634.4L485.3 636.5L487.7 638.2L490.3 639.3L947.9 770.5L950.5 770.9L953.0 770.6L955.0 769.7L956.6 768.1L957.6 766.1L957.9 763.7L956.8 523.8L956.4 521.2L955.4 518.5L953.8 516.1L951.7 513.9L949.3 512.3L946.7 511.2L489.0 379.9L486.4 379.5L484.0 379.8L482.0 380.8L480.4 382.3L479.4 384.4L479.0 386.8ZM521.3 591.2L521.7 593.8L522.7 596.4L524.3 598.9L526.4 601.0L528.8 602.7L531.4 603.8L989.0 735.0L991.6 735.4L994.0 735.2L996.1 734.2L997.7 732.7L998.7 730.6L999.0 728.2L997.8 488.3L997.5 485.7L996.5 483.0L994.9 480.6L992.8 478.4L990.4 476.8L987.8 475.7L530.1 344.5L527.5 344.0L525.1 344.3L523.0 345.3L521.4 346.8L520.5 348.9L520.1 351.3ZM297.2 823.2L297.4 824.6L297.9 825.6L298.9 826.0L300.1 825.9L301.5 825.3L303.0 824.2L564.3 598.4L565.8 596.9L567.2 595.1L568.4 593.1L569.4 591.0L569.9 589.1L570.1 587.4L568.9 341.6L568.7 340.2L568.1 339.3L567.2 338.8L566.0 338.9L564.6 339.5L563.1 340.6L301.7 566.5L300.2 568.0L298.8 569.8L297.6 571.8L296.7 573.8L296.1 575.8L296.0 577.5ZM368.3 843.6L368.5 845.0L369.1 846.0L370.0 846.4L371.2 846.3L372.6 845.7L374.1 844.6L635.4 618.8L636.9 617.3L638.3 615.5L639.5 613.5L640.5 611.4L641.0 609.5L641.2 607.8L640.0 362.0L639.8 360.6L639.2 359.7L638.3 359.2L637.1 359.3L635.7 359.9L634.2 361.0L372.8 586.9L371.3 588.4L369.9 590.2L368.7 592.2L367.8 594.2L367.2 596.2L367.1 597.9ZM439.4 864.0L439.6 865.4L440.2 866.4L441.1 866.8L442.3 866.7L443.7 866.1L445.2 865.0L706.5 639.2L708.1 637.7L709.5 635.9L710.7 633.9L711.6 631.8L712.1 629.9L712.3 628.2L711.1 382.4L710.9 381.0L710.3 380.1L709.4 379.6L708.2 379.7L706.8 380.3L705.3 381.4L443.9 607.2L442.4 608.8L441.0 610.6L439.8 612.6L438.9 614.6L438.4 616.5L438.2 618.3ZM510.5 884.4L510.7 885.8L511.3 886.7L512.2 887.2L513.4 887.1L514.8 886.5L516.3 885.4L777.7 659.6L779.2 658.1L780.6 656.2L781.8 654.3L782.7 652.2L783.2 650.3L783.4 648.5L782.2 402.8L782.0 401.4L781.4 400.5L780.5 400.0L779.3 400.1L777.9 400.7L776.4 401.8L515.1 627.6L513.5 629.1L512.1 631.0L510.9 632.9L510.0 635.0L509.5 636.9L509.3 638.7ZM581.6 904.8L581.8 906.2L582.4 907.1L583.3 907.6L584.5 907.5L585.9 906.9L587.4 905.8L848.8 680.0L850.3 678.5L851.7 676.6L852.9 674.6L853.8 672.6L854.4 670.7L854.5 668.9L853.3 423.2L853.1 421.8L852.5 420.8L851.6 420.4L850.4 420.5L849.0 421.1L847.5 422.2L586.2 648.0L584.7 649.5L583.3 651.3L582.1 653.3L581.1 655.4L580.6 657.3L580.4 659.1ZM652.7 925.2L652.9 926.6L653.5 927.5L654.4 928.0L655.6 927.9L657.0 927.3L658.5 926.2L919.9 700.3L921.4 698.8L922.8 697.0L924.0 695.0L924.9 693.0L925.5 691.0L925.6 689.3L924.4 443.6L924.2 442.2L923.6 441.2L922.7 440.8L921.5 440.9L920.1 441.5L918.6 442.6L657.3 668.4L655.8 669.9L654.4 671.7L653.2 673.7L652.2 675.8L651.7 677.7L651.5 679.4ZM723.8 945.6L724.0 947.0L724.6 947.9L725.5 948.4L726.7 948.3L728.1 947.7L729.6 946.6L991.0 720.7L992.5 719.2L993.9 717.4L995.1 715.4L996.0 713.4L996.6 711.4L996.8 709.7L995.5 464.0L995.3 462.6L994.8 461.6L993.8 461.2L992.6 461.3L991.2 461.9L989.7 463.0L728.4 688.8L726.9 690.3L725.5 692.1L724.3 694.1L723.3 696.2L722.8 698.1L722.6 699.8ZM276.3 771.9L274.0 774.4L272.6 776.8L272.2 779.2L272.8 781.3L274.4 783.0L276.9 784.1L730.5 914.2L733.7 914.7L737.5 914.6L741.4 913.8L745.3 912.4L748.9 910.6L752.0 908.3L1003.8 690.8L1006.1 688.3L1007.5 685.8L1007.9 683.5L1007.3 681.4L1005.7 679.7L1003.2 678.6L549.6 548.5L546.4 548.0L542.7 548.1L538.7 548.9L534.8 550.3L531.2 552.1L528.1 554.4ZM275.9 680.5L273.5 683.0L272.1 685.5L271.7 687.8L272.3 689.9L274.0 691.6L276.5 692.7L730.1 822.8L733.3 823.3L737.0 823.2L741.0 822.4L744.9 821.0L748.5 819.2L751.6 816.9L1003.3 599.4L1005.7 596.9L1007.1 594.4L1007.5 592.1L1006.9 590.0L1005.3 588.3L1002.8 587.2L549.1 457.1L545.9 456.6L542.2 456.7L538.3 457.5L534.3 458.9L530.7 460.7L527.6 463.0ZM275.4 585.1L273.1 587.6L271.7 590.1L271.2 592.4L271.9 594.5L273.5 596.2L276.0 597.3L729.6 727.4L732.8 727.9L736.5 727.8L740.5 727.0L744.4 725.6L748.0 723.8L751.1 721.5L1002.9 504.0L1005.2 501.6L1006.6 499.1L1007.0 496.7L1006.4 494.6L1004.8 492.9L1002.3 491.8L548.7 361.7L545.4 361.2L541.7 361.3L537.8 362.1L533.9 363.5L530.2 365.3L527.2 367.6ZM359.3 814.0L358.0 547.8M428.2 754.5L426.9 488.3M497.1 694.9L495.8 428.7M566.0 635.4L564.7 369.2M478.2 848.1L476.9 581.9M547.1 788.6L545.8 522.4M616.0 729.0L614.7 462.8M684.9 669.5L683.6 403.3M597.1 882.2L595.8 616.0M666.0 822.7L664.7 556.5M734.9 763.1L733.6 496.9M803.8 703.6L802.5 437.4M716.0 916.3L714.7 650.1M784.9 856.8L783.6 590.6M853.8 797.2L852.5 531.0M922.7 737.7L921.4 471.5" fill="none" stroke="rgba(228,150,150,0.07)" stroke-width="2.5" stroke-linejoin="round" stroke-linecap="butt"/><path d="M354.5 813.1L360.1 811.0L364.1 814.9L358.5 817.0Z" fill="rgba(192,52,42,0.85)"/><path d="M353.2 546.9L358.8 544.8L362.8 548.7L357.2 550.8Z" fill="rgba(192,52,42,0.85)"/><path d="M423.4 753.6L429.0 751.5L433.0 755.4L427.4 757.5Z" fill="rgba(192,52,42,0.85)"/><path d="M422.1 487.4L427.7 485.3L431.7 489.2L426.1 491.3Z" fill="rgba(192,52,42,0.85)"/><path d="M492.3 694.0L497.9 691.9L501.9 695.8L496.3 697.9Z" fill="rgba(192,52,42,0.85)"/><path d="M491.0 427.8L496.6 425.7L500.6 429.6L495.0 431.7Z" fill="rgba(192,52,42,0.85)"/><path d="M561.2 634.5L566.8 632.4L570.8 636.3L565.2 638.4Z" fill="rgba(192,52,42,0.85)"/><path d="M559.9 368.3L565.5 366.2L569.5 370.1L563.9 372.2Z" fill="rgba(192,52,42,0.85)"/><path d="M473.4 847.2L479.0 845.1L483.0 849.0L477.4 851.1Z" fill="rgba(192,52,42,0.85)"/><path d="M472.1 581.0L477.7 578.9L481.7 582.8L476.1 584.9Z" fill="rgba(192,52,42,0.85)"/><path d="M542.3 787.7L547.9 785.6L551.9 789.5L546.3 791.6Z" fill="rgba(192,52,42,0.85)"/><path d="M541.0 521.5L546.6 519.4L550.6 523.3L545.0 525.4Z" fill="rgba(192,52,42,0.85)"/><path d="M611.2 728.1L616.8 726.0L620.8 729.9L615.2 732.0Z" fill="rgba(192,52,42,0.85)"/><path d="M609.9 461.9L615.5 459.8L619.5 463.7L613.9 465.8Z" fill="rgba(192,52,42,0.85)"/><path d="M680.1 668.6L685.7 666.5L689.7 670.4L684.1 672.5Z" fill="rgba(192,52,42,0.85)"/><path d="M678.8 402.4L684.4 400.3L688.4 404.2L682.8 406.3Z" fill="rgba(192,52,42,0.85)"/><path d="M592.3 881.3L597.9 879.2L601.9 883.1L596.3 885.2Z" fill="rgba(192,52,42,0.85)"/><path d="M591.0 615.1L596.6 613.0L600.6 616.9L595.0 619.0Z" fill="rgba(192,52,42,0.85)"/><path d="M661.2 821.8L666.8 819.7L670.8 823.6L665.2 825.7Z" fill="rgba(192,52,42,0.85)"/><path d="M659.9 555.6L665.5 553.5L669.5 557.4L663.9 559.5Z" fill="rgba(192,52,42,0.85)"/><path d="M730.1 762.2L735.7 760.1L739.7 764.0L734.1 766.1Z" fill="rgba(192,52,42,0.85)"/><path d="M728.8 496.0L734.4 493.9L738.4 497.8L732.8 499.9Z" fill="rgba(192,52,42,0.85)"/><path d="M799.0 702.7L804.6 700.6L808.6 704.5L803.0 706.6Z" fill="rgba(192,52,42,0.85)"/><path d="M797.7 436.5L803.3 434.4L807.3 438.3L801.7 440.4Z" fill="rgba(192,52,42,0.85)"/><path d="M711.2 915.4L716.8 913.3L720.8 917.2L715.2 919.3Z" fill="rgba(192,52,42,0.85)"/><path d="M709.9 649.2L715.5 647.1L719.5 651.0L713.9 653.1Z" fill="rgba(192,52,42,0.85)"/><path d="M780.1 855.9L785.7 853.8L789.7 857.7L784.1 859.8Z" fill="rgba(192,52,42,0.85)"/><path d="M778.8 589.7L784.4 587.6L788.4 591.5L782.8 593.6Z" fill="rgba(192,52,42,0.85)"/><path d="M849.0 796.3L854.6 794.2L858.6 798.1L853.0 800.2Z" fill="rgba(192,52,42,0.85)"/><path d="M847.7 530.1L853.3 528.0L857.3 531.9L851.7 534.0Z" fill="rgba(192,52,42,0.85)"/><path d="M917.9 736.8L923.5 734.7L927.5 738.6L921.9 740.7Z" fill="rgba(192,52,42,0.85)"/><path d="M916.6 470.6L922.2 468.5L926.2 472.4L920.6 474.5Z" fill="rgba(192,52,42,0.85)"/><ellipse cx="310.0" cy="823.9" rx="1.7" ry="3" fill="none" stroke="rgba(205,60,45,0.9)" stroke-width="0.9" transform="rotate(20 310.0 823.9)"/><ellipse cx="351.1" cy="788.4" rx="1.7" ry="3" fill="none" stroke="rgba(205,60,45,0.9)" stroke-width="0.9" transform="rotate(20 351.1 788.4)"/><ellipse cx="392.2" cy="753.0" rx="1.7" ry="3" fill="none" stroke="rgba(205,60,45,0.9)" stroke-width="0.9" transform="rotate(20 392.2 753.0)"/><ellipse cx="433.2" cy="717.5" rx="1.7" ry="3" fill="none" stroke="rgba(205,60,45,0.9)" stroke-width="0.9" transform="rotate(20 433.2 717.5)"/><ellipse cx="474.3" cy="682.0" rx="1.7" ry="3" fill="none" stroke="rgba(205,60,45,0.9)" stroke-width="0.9" transform="rotate(20 474.3 682.0)"/><ellipse cx="515.4" cy="646.5" rx="1.7" ry="3" fill="none" stroke="rgba(205,60,45,0.9)" stroke-width="0.9" transform="rotate(20 515.4 646.5)"/><ellipse cx="556.5" cy="611.0" rx="1.7" ry="3" fill="none" stroke="rgba(205,60,45,0.9)" stroke-width="0.9" transform="rotate(20 556.5 611.0)"/><ellipse cx="315.2" cy="813.7" rx="1.7" ry="3" fill="none" stroke="rgba(205,60,45,0.9)" stroke-width="0.9" transform="rotate(20 315.2 813.7)"/><ellipse cx="307.7" cy="821.3" rx="1.7" ry="3" fill="none" stroke="rgba(205,60,45,0.9)" stroke-width="0.9" transform="rotate(20 307.7 821.3)"/><ellipse cx="386.3" cy="834.1" rx="1.7" ry="3" fill="none" stroke="rgba(205,60,45,0.9)" stroke-width="0.9" transform="rotate(20 386.3 834.1)"/><ellipse cx="378.8" cy="841.7" rx="1.7" ry="3" fill="none" stroke="rgba(205,60,45,0.9)" stroke-width="0.9" transform="rotate(20 378.8 841.7)"/><ellipse cx="457.4" cy="854.5" rx="1.7" ry="3" fill="none" stroke="rgba(205,60,45,0.9)" stroke-width="0.9" transform="rotate(20 457.4 854.5)"/><ellipse cx="449.9" cy="862.1" rx="1.7" ry="3" fill="none" stroke="rgba(205,60,45,0.9)" stroke-width="0.9" transform="rotate(20 449.9 862.1)"/><ellipse cx="528.5" cy="874.8" rx="1.7" ry="3" fill="none" stroke="rgba(205,60,45,0.9)" stroke-width="0.9" transform="rotate(20 528.5 874.8)"/><ellipse cx="521.0" cy="882.5" rx="1.7" ry="3" fill="none" stroke="rgba(205,60,45,0.9)" stroke-width="0.9" transform="rotate(20 521.0 882.5)"/><ellipse cx="599.6" cy="895.2" rx="1.7" ry="3" fill="none" stroke="rgba(205,60,45,0.9)" stroke-width="0.9" transform="rotate(20 599.6 895.2)"/><ellipse cx="592.1" cy="902.9" rx="1.7" ry="3" fill="none" stroke="rgba(205,60,45,0.9)" stroke-width="0.9" transform="rotate(20 592.1 902.9)"/><ellipse cx="670.7" cy="915.6" rx="1.7" ry="3" fill="none" stroke="rgba(205,60,45,0.9)" stroke-width="0.9" transform="rotate(20 670.7 915.6)"/><ellipse cx="663.2" cy="923.3" rx="1.7" ry="3" fill="none" stroke="rgba(205,60,45,0.9)" stroke-width="0.9" transform="rotate(20 663.2 923.3)"/><ellipse cx="741.8" cy="936.0" rx="1.7" ry="3" fill="none" stroke="rgba(205,60,45,0.9)" stroke-width="0.9" transform="rotate(20 741.8 936.0)"/><ellipse cx="734.3" cy="943.7" rx="1.7" ry="3" fill="none" stroke="rgba(205,60,45,0.9)" stroke-width="0.9" transform="rotate(20 734.3 943.7)"/><path d="M244.8 839.2L746.6 983.1L1037.3 731.9L535.5 588.0Z" fill="rgba(30,30,110,0.27)" stroke="none" stroke-width="1" /><path d="M244.8 839.2L746.6 983.1" stroke="#00007a" stroke-width="1.25" fill="none" /><path d="M746.6 983.1L1037.3 731.9" stroke="#00007a" stroke-width="1.25" fill="none" /><path d="M746.6 983.1L745.2 697.5" stroke="rgba(222,222,222,0.85)" stroke-width="1.3" fill="none" /><path d="M243.4 553.6L745.2 697.5" stroke="rgba(235,232,220,0.3)" stroke-width="1" fill="none" /><path d="M244.8 839.2V850.2M244.8 839.2L236.8 845.2M244.8 839.2L257.8 842.7" stroke="#00006e" stroke-width="1.3" fill="none" /><ellipse cx="235.3" cy="846.0" rx="3.8" ry="3.6" fill="#00006e"/><ellipse cx="244.6" cy="853.2" rx="4.4" ry="2.6" fill="#00006e"/><ellipse cx="259.3" cy="843.0" rx="2.4" ry="4.2" fill="#00006e" transform="rotate(18 259.3 843.0)"/><path d="M746.6 983.1V994.1M746.6 983.1L738.6 989.1M746.6 983.1L759.6 986.6" stroke="#00006e" stroke-width="1.3" fill="none" /><ellipse cx="737.1" cy="989.9" rx="3.8" ry="3.6" fill="#00006e"/><ellipse cx="746.4" cy="997.1" rx="4.4" ry="2.6" fill="#00006e"/><ellipse cx="761.1" cy="986.9" rx="2.4" ry="4.2" fill="#00006e" transform="rotate(18 761.1 986.9)"/><path d="M1037.3 731.9V742.9M1037.3 731.9L1029.3 737.9M1037.3 731.9L1050.3 735.4" stroke="#00006e" stroke-width="1.3" fill="none" /><ellipse cx="1027.8" cy="738.7" rx="3.8" ry="3.6" fill="#00006e"/><ellipse cx="1037.1" cy="745.9" rx="4.4" ry="2.6" fill="#00006e"/><ellipse cx="1051.8" cy="735.7" rx="2.4" ry="4.2" fill="#00006e" transform="rotate(18 1051.8 735.7)"/><path d="M655.4 469.5L780.7 361.3L999.4 424.0L999.6 452.3L874.3 560.5L655.5 497.8Z" fill="rgba(84,96,140,0.56)" stroke="none" stroke-width="1" /><path d="M655.5 497.8L780.8 389.5L780.7 361.3L655.4 469.5Z" fill="rgba(60,72,125,0.2)" stroke="none" stroke-width="1" /><path d="M655.5 497.8L780.8 389.5L999.6 452.3L874.3 560.5Z" fill="rgba(60,72,125,0.16)" stroke="none" stroke-width="1" /><path d="M655.4 469.5L780.7 361.3" stroke="#2746a0" stroke-width="1" fill="none" /><path d="M780.7 361.3L999.4 424.0" stroke="#2746a0" stroke-width="1" fill="none" /><path d="M999.4 424.0L874.1 532.3" stroke="#2746a0" stroke-width="1" fill="none" /><path d="M780.7 361.3L780.8 389.5" stroke="#2746a0" stroke-width="1" fill="none" /><path d="M780.8 389.5L999.6 452.3" stroke="#2746a0" stroke-width="1" fill="none" /><path d="M780.8 389.5L655.5 497.8" stroke="#2746a0" stroke-width="1" fill="none" /><path d="M999.4 424.0L999.6 452.3" stroke="#2746a0" stroke-width="1" fill="none" /><path d="M999.6 452.3L874.3 560.5" stroke="#2746a0" stroke-width="1" fill="none" /><rect x="784.8" y="376" width="9.2" height="80" fill="#ad9122"/><rect x="784.8" y="376" width="3.4" height="80" fill="#c2a32a"/><ellipse cx="789.4" cy="376" rx="4.9" ry="2.4" fill="#c6a82a" stroke="#f5d800" stroke-width="1.2"/><rect x="964.9" y="428" width="9.2" height="80" fill="#ad9122"/><rect x="964.9" y="428" width="3.4" height="80" fill="#c2a32a"/><ellipse cx="969.5" cy="428" rx="4.9" ry="2.4" fill="#c6a82a" stroke="#f5d800" stroke-width="1.2"/></svg>
<div class="abs" style="left:1292px;top:205px;width:627px;height:31px;background:#f26f21"></div>
<div class="t" style="left:1304.80px;top:214.54px;font-size:15px;color:#fff;font-weight:bold;transform:scaleX(0.8716);transform-origin:0 0;">LC2</div>
<div class="t" style="left:1342.70px;top:214.54px;font-size:15px;color:#fff;">[ Lastfall ]</div>
<div class="t" style="left:1693.30px;top:214.54px;font-size:15px;color:#fff;font-weight:bold;">Neu</div>
<div class="t" style="left:1747.30px;top:214.54px;font-size:15px;color:#fff;font-weight:bold;transform:scaleX(0.9536);transform-origin:0 0;">Kopieren</div>
<div class="t" style="left:1835.70px;top:214.54px;font-size:15px;color:#fff;font-weight:bold;transform:scaleX(0.9078);transform-origin:0 0;">Löschen</div>
<div class="t" style="left:1335.70px;top:256.11px;font-size:14.8px;color:#333;font-weight:bold;transform:scaleX(0.9573);transform-origin:0 0;">Lastfall</div>
<div class="t" style="left:1336.60px;top:332.21px;font-size:14.8px;color:#333;font-weight:bold;transform:scaleX(0.9634);transform-origin:0 0;">Lastimpulse</div>
<div class="t" style="left:1335.70px;top:287.24px;font-size:15px;color:#444;transform:scaleX(0.9846);transform-origin:0 0;">Lastfalltyp</div>
<div class="abs" style="left:1418px;top:281px;width:484px;height:25px;border:1px solid #dcdcdc;box-sizing:border-box;background:#fff"></div>
<div class="t" style="left:1426.60px;top:286.68px;font-size:15.2px;color:#1a1a1a;transform:scaleX(0.9661);transform-origin:0 0;">Ständig</div>
<div class="abs" style="left:1336px;top:387px;width:566px;height:43px;background:#f0f0f0;box-sizing:border-box;border:1px solid #b9b9b9;border-bottom:2px solid #a6a6a6;border-left:2px solid #b0b0b0"></div>
<div class="abs" style="left:1461px;top:388px;width:1px;height:40px;background:#b9b9b9"></div>
<div class="abs" style="left:1586px;top:388px;width:1px;height:40px;background:#b9b9b9"></div>
<div class="t" style="left:1342.30px;top:401.17px;font-size:14.6px;color:#222;font-weight:bold;transform:scaleX(1.0386);transform-origin:0 0;">Name</div>
<div class="t" style="left:1467.70px;top:401.17px;font-size:14.6px;color:#222;font-weight:bold;transform:scaleX(0.9570);transform-origin:0 0;">Typ</div>
<svg style="left:0px;top:0px" width="1920" height="450" viewBox="0 0 1920 450" ><path d="M1314.8 261.2L1319.7 266.1L1324.7 261.2" stroke="#f26f21" stroke-width="1.3" fill="none" /><path d="M1315.7 337.5L1320.6 342.4L1325.5 337.5" stroke="#f26f21" stroke-width="1.3" fill="none" /><path d="M1886 291.7L1891 296.7L1896 291.7" stroke="#222" stroke-width="1.3" fill="none" /><rect x="1336.7" y="357.9" width="24" height="24" fill="#fff" stroke="#000" stroke-width="1"/><path d="M1341 369.3H1354.4M1347.7 362.6V376" stroke="#000" stroke-width="1.3" fill="none" /><path d="M1368.8 361.9H1379.2V378H1364.4V366.3L1368.8 361.9V366.3H1364.4" stroke="#1a1a1a" stroke-width="1.2" fill="none" /><path d="M1372.2 359.3H1381V375" stroke="#f26f21" stroke-width="1.2" fill="none" /><path d="M1388.4 364H1407.6M1394 364V360.1H1402.4V364M1391 364V378H1405V364M1395.8 368V375M1400.4 368V375" stroke="#1a1a1a" stroke-width="1.2" fill="none" /><path d="M1413.2 364H1422.5M1419 364V360.1H1422.5M1415.8 364V378H1430V368.5M1420.6 368V375M1425.2 370V375" stroke="#1a1a1a" stroke-width="1.2" fill="none" /><path d="M1424.5 359.6H1432.8M1424.5 362.6H1432.8M1424.5 365.6H1432.8" stroke="#f26f21" stroke-width="1.1" fill="none" /><path d="M1437 403.3H1447.2L1443.6 408V412.2L1441 413.9V408Z" fill="#333"/><path d="M1562 403.3H1572.2L1568.6 408V412.2L1566 413.9V408Z" fill="#333"/></svg>
<div class="t" style="left:1084.50px;top:369.08px;font-size:15.2px;color:#3a3a3a;font-weight:bold;transform:scaleX(0.9776);transform-origin:0 0;">DRM1</div>
<div class="t" style="left:1109.40px;top:397.38px;font-size:15.2px;color:#3a3a3a;font-weight:bold;transform:scaleX(0.9572);transform-origin:0 0;">Bauteile</div>
<div class="t" style="left:1108.30px;top:425.21px;font-size:15.4px;color:#555;">SB1</div>
<div class="t" style="left:1134.50px;top:704.98px;font-size:15.2px;color:#3a3a3a;font-weight:bold;transform:scaleX(0.9373);transform-origin:0 0;">Lastfälle</div>
<div class="t" style="left:1133.30px;top:733.21px;font-size:15.4px;color:#555;transform:scaleX(0.7786);transform-origin:0 0;">LC1</div>
<svg style="left:0px;top:0px" width="1300" height="1000" viewBox="0 0 1300 1000" ><path d="M1061.8 382.3H1069.1V375.2Z" fill="#404040"/><path d="M1086.4 410.4H1093.7V403.29999999999995Z" fill="#404040"/><path d="M1111.6 718.5H1118.8999999999999V711.4Z" fill="#404040"/><path d="M1127 757H1240.5L1259.5 770.3L1240.5 783.8H1127Z" fill="#f26f21"/></svg>
<div class="t" style="left:1133.30px;top:760.91px;font-size:15.4px;color:#fff;transform:scaleX(0.8247);transform-origin:0 0;">LC2</div>
<div class="t" style="left:1109.40px;top:788.98px;font-size:15.2px;color:#3a3a3a;font-weight:bold;transform:scaleX(0.9570);transform-origin:0 0;">Bewehrung</div>
<div class="t" style="left:1134.50px;top:816.88px;font-size:15.2px;color:#3a3a3a;font-weight:bold;transform:scaleX(0.9651);transform-origin:0 0;">Stabgruppe</div>
<div class="t" style="left:1161.10px;top:847.81px;font-size:15.4px;color:#555;transform:scaleX(0.8871);transform-origin:0 0;">GB3D1</div>
<div class="t" style="left:1161.10px;top:875.81px;font-size:15.4px;color:#555;transform:scaleX(0.8871);transform-origin:0 0;">GB3D2</div>
<div class="t" style="left:1161.10px;top:903.81px;font-size:15.4px;color:#555;transform:scaleX(0.8871);transform-origin:0 0;">GB3D3</div>
<div class="t" style="left:1161.10px;top:931.81px;font-size:15.4px;color:#555;transform:scaleX(0.8871);transform-origin:0 0;">GB3D4</div>
<svg style="left:0px;top:0px" width="1300" height="1000" viewBox="0 0 1300 1000" ><path d="M1086.4 802.4H1093.7V795.3Z" fill="#404040"/><path d="M1111.6 830.4H1118.8999999999999V823.3Z" fill="#404040"/><rect x="1134.3" y="849.1" width="13.4" height="12.8" rx="2" fill="#e6e6e6"/><path d="M1137.2 855.4L1141.2 859.7L1150 847.9" stroke="#f7931e" stroke-width="2.6" fill="none" stroke-linejoin="miter"/><rect x="1134.3" y="877.1" width="13.4" height="12.8" rx="2" fill="#e6e6e6"/><path d="M1137.2 883.4L1141.2 887.7L1150 875.9" stroke="#f7931e" stroke-width="2.6" fill="none" stroke-linejoin="miter"/><rect x="1134.3" y="905.1" width="13.4" height="12.8" rx="2" fill="#e6e6e6"/><path d="M1137.2 911.4L1141.2 915.7L1150 903.9" stroke="#f7931e" stroke-width="2.6" fill="none" stroke-linejoin="miter"/><rect x="1134.3" y="933.1" width="13.4" height="12.8" rx="2" fill="#e6e6e6"/><path d="M1137.2 939.4L1141.2 943.7L1150 931.9" stroke="#f7931e" stroke-width="2.6" fill="none" stroke-linejoin="miter"/></svg>
<div class="abs" style="left:1113px;top:206px;width:33px;height:31px;background:#dcdcdc"></div>
<div class="abs" style="left:1053px;top:208px;width:1px;height:27px;background:#cfcfcf"></div>
<div class="abs" style="left:1110px;top:208px;width:1px;height:27px;background:#cfcfcf"></div>
<div class="abs" style="left:1180px;top:208px;width:1px;height:27px;background:#cfcfcf"></div>
<svg style="left:0px;top:0px" width="1300" height="1100" viewBox="0 0 1300 1100" ><path d="M1007.6 215.8H1022.5V229.9M1011.7 212.4V226.7H1025.9" stroke="#1a1a1a" stroke-width="1.4" fill="none" /><path d="M1038.8 219.7L1042.7 223.5L1046.7 219.7" stroke="#1a1a1a" stroke-width="1.2" fill="none" /><path d="M1065.3 213.7H1070.4V218.2" stroke="#1a1a1a" stroke-width="1.3" fill="none" /><path d="M1070.4 213.7C1063.8 217.8 1062 225.5 1066.2 229.2C1068.3 230.8 1070.6 230 1071.8 228.4" stroke="#1a1a1a" stroke-width="1.3" fill="none" /><path d="M1075.6 223V228.3H1081.2" stroke="#1a1a1a" stroke-width="1.3" fill="none" /><path d="M1075.6 228.3C1082 224.5 1084.6 217.5 1082.4 214.2C1081.3 212.6 1079.3 212.6 1078.2 213.8" stroke="#1a1a1a" stroke-width="1.3" fill="none" /><path d="M1095.4 219.7L1099.3 223.5L1103.3 219.7" stroke="#1a1a1a" stroke-width="1.2" fill="none" /><path d="M1120.4 217.3H1134.9V230.4H1120.4ZM1120.4 217.3L1125.4 211.9H1139.7L1134.9 217.3M1139.7 211.9V224.6L1134.9 230.4" stroke="#1a1a1a" stroke-width="1.5" fill="none" stroke-linejoin="round"/><path d="M1125.4 211.9V224.6H1139.7M1125.4 224.6L1120.4 230.4" stroke="#1a1a1a" stroke-width="1.1" fill="none" /><path d="M1153.8 216.8L1160.1 211.4H1173.9V225.1L1166.9 230.6H1153.8Z" fill="#000"/><path d="M1154.6 217H1166.9V230M1166.9 217L1173.2 212" stroke="#fff" stroke-width="0.9" fill="none" /><path d="M1190.6 216.4L1209.2 213.8V220.9L1197.9 227.8L1190.6 224.4Z" stroke="#1a1a1a" stroke-width="1.4" fill="none" stroke-linejoin="round"/><path d="M1190.6 216.4L1197.9 218.6L1209.2 214.6M1197.9 218.6V227.8" stroke="#1a1a1a" stroke-width="1.2" fill="none" /><path d="M1223.6 219.3L1233.4 213.1L1243.2 219.3M1226.6 219.4V228.9H1231.4V223.6H1235.6V228.9H1240.4V219.4" stroke="#1a1a1a" stroke-width="1.15" fill="none" stroke-linejoin="round"/><path d="M1257.3 217V212.4H1261.9M1257.3 212.4L1261.6 216.7M1270.6 212.4H1275.2V217M1275.2 212.4L1270.9 216.7M1257.3 225.4V230H1261.9M1257.3 230L1261.6 225.7M1275.2 225.4V230H1270.6M1275.2 230L1270.9 225.7" stroke="#1a1a1a" stroke-width="1.3" fill="none" /><ellipse cx="1215.5" cy="297.7" rx="41.5" ry="20.2" fill="none" stroke="#e1e1e1" stroke-width="10.8"/><path d="M1182.6 257.4L1208.3 242.6L1245.6 250.8L1242.3 285.7L1224 309.6L1186.6 295.3Z" fill="#b1b1b1" stroke="#8f8f8f" stroke-width="1" stroke-linejoin="round"/><path d="M1182.6 257.4L1225.3 267.9L1245.6 250.8M1225.3 267.9L1224 309.6" stroke="#8d8d8d" stroke-width="1" fill="none" /><path d="M1208.3 242.6L1209.6 277L1186.6 295.3M1209.6 277L1242.3 285.7" stroke="#999" stroke-width="0.9" fill="none" /><text x="1200.3" y="288.6" font-size="8.5" fill="#f2f2f2" font-family="Liberation Sans" font-weight="bold">+Y</text><path d="M1237.3 275.6C1238.8 277.6 1238.6 280.2 1236.2 282" stroke="#f4f4f4" stroke-width="1.4" fill="none" /><path d="M1211.6 253.2L1215 254.4M1216.8 253L1220.8 253.8M1214.6 255.6L1216.6 256" stroke="#f4f4f4" stroke-width="1.3" fill="none" /><path d="M1172.2 278.4L1183.6 275.7" stroke="#9a9a9a" stroke-width="1" fill="none" /><path d="M1178.6 274.6L1181.4 279.8M1181.6 274.2L1178.6 280.2" stroke="#6e6e6e" stroke-width="1.3" fill="none" /><path d="M1251.4 302.2L1264.6 306.4M1261.8 303.8L1264.8 306.5L1261 307.4" stroke="#a6a6a6" stroke-width="0.9" fill="none" /><path d="M1180.6 321.6L1188.4 315L1186 310.4M1188.4 315L1196.2 313.4" stroke="#7d7d7d" stroke-width="2.5" fill="none" stroke-linejoin="round"/><path d="M62.3 1037V1010" stroke="#0000ff" stroke-width="4.2" fill="none" /><path d="M56.8 1011.5L62.3 996.5L67.8 1011.5Z" fill="#0000ff"/><path d="M63 1036L76 1026" stroke="#008000" stroke-width="4.2" fill="none" /><path d="M71 1021L86 1017.3L77.5 1030Z" fill="#0a8a0a"/><path d="M64 1039L86 1046" stroke="#ff0000" stroke-width="4" fill="none" /><path d="M87.5 1040L103.5 1050L84 1051Z" fill="#ff1010"/><circle cx="61.3" cy="1038.5" r="5.2" fill="#777"/><circle cx="60" cy="1037" r="2" fill="#aaa"/></svg>
<div class="t" style="left:64.00px;top:977.38px;font-size:17px;color:#111;">Z</div>
<div class="t" style="left:86.50px;top:996.88px;font-size:17px;color:#111;">Y</div>
<div class="t" style="left:104.00px;top:1028.38px;font-size:17px;color:#111;">X</div>
<div class="t" style="left:11.30px;top:1112.31px;font-size:14.8px;color:#fff;transform:scaleX(0.9621);transform-origin:0 0;">Bemessungsnorm:</div>
<div class="t" style="left:133.30px;top:1112.31px;font-size:14.8px;color:#fff;font-weight:bold;transform:scaleX(0.9435);transform-origin:0 0;">EN</div>
<div class="t" style="left:173.30px;top:1112.31px;font-size:14.8px;color:#fff;transform:scaleX(0.9566);transform-origin:0 0;">Rundung:</div>
<div class="t" style="left:237.30px;top:1112.31px;font-size:14.8px;color:#fff;font-weight:bold;transform:scaleX(0.9596);transform-origin:0 0;">Metrisch</div>
<div class="t" style="left:316.30px;top:1112.31px;font-size:14.8px;color:#fff;transform:scaleX(0.9949);transform-origin:0 0;">Darstellungseinheiten:</div>
<div class="t" style="left:465.30px;top:1112.31px;font-size:14.8px;color:#fff;font-weight:bold;transform:scaleX(0.9596);transform-origin:0 0;">Metrisch</div>
<div class="abs" style="left:618px;top:434px;width:685px;height:272px;background:#fff;border:1px solid #aab2ba;box-sizing:border-box;box-shadow:0 0 2px rgba(0,0,0,0.12)"></div>
<div class="abs" style="left:619px;top:435px;width:683px;height:38px;background:#f26f21"></div>
<div class="t" style="left:629.60px;top:445.85px;font-size:19.2px;color:#fff;transform:scaleX(0.9587);transform-origin:0 0;">Lasttyp wählen</div>
<svg style="left:0px;top:0px" width="1320" height="720" viewBox="0 0 1320 720" ><path d="M1267.3 448L1279.2 459.9M1279.2 448L1267.3 459.9" stroke="#fff" stroke-width="1" fill="none" /><rect x="629.5" y="495.5" width="662" height="199" rx="4.5" fill="none" stroke="#000" stroke-width="1.2"/><rect x="636" y="490" width="176" height="10" fill="#fff"/><rect x="648.5" y="519.5" width="137" height="136" fill="#fff" stroke="#ebebeb" stroke-width="1"/><rect x="811.5" y="519.5" width="137" height="136" fill="#fff" stroke="#ebebeb" stroke-width="1"/><rect x="973.5" y="519.5" width="137" height="136" fill="#fff" stroke="#ebebeb" stroke-width="1"/><rect x="1136.3" y="519.5" width="137" height="136" fill="#fff" stroke="#ebebeb" stroke-width="1"/><rect x="658.3" y="588.2" width="112.6" height="53.3" fill="#adcdad"/><path d="M658.3 588.3H770.9" stroke="#2a2a2a" stroke-width="1.5" fill="none" /><path d="M820.5 588.3H933.9" stroke="#2a2a2a" stroke-width="1.5" fill="none" /><path d="M877.1 531.3V580" stroke="#3b8b3b" stroke-width="1.4" fill="none" /><path d="M877.1 588.5L869.9 564L877.1 573L884.3000000000001 564Z" fill="#3b8b3b"/><path d="M983.2 588.3H1096" stroke="#2a2a2a" stroke-width="1.5" fill="none" /><path d="M997 531.6H1085" stroke="#3b8b3b" stroke-width="1.4" fill="none" /><path d="M997.0 531.6V580" stroke="#3b8b3b" stroke-width="1.4" fill="none" /><path d="M997.0 588.5L990.4 565L997.0 574L1003.6 565Z" fill="#3b8b3b"/><path d="M1014.6 531.6V580" stroke="#3b8b3b" stroke-width="1.4" fill="none" /><path d="M1014.6 588.5L1008.0 565L1014.6 574L1021.2 565Z" fill="#3b8b3b"/><path d="M1032.2 531.6V580" stroke="#3b8b3b" stroke-width="1.4" fill="none" /><path d="M1032.2 588.5L1025.6000000000001 565L1032.2 574L1038.8 565Z" fill="#3b8b3b"/><path d="M1049.8 531.6V580" stroke="#3b8b3b" stroke-width="1.4" fill="none" /><path d="M1049.8 588.5L1043.2 565L1049.8 574L1056.3999999999999 565Z" fill="#3b8b3b"/><path d="M1067.4 531.6V580" stroke="#3b8b3b" stroke-width="1.4" fill="none" /><path d="M1067.4 588.5L1060.8000000000002 565L1067.4 574L1074.0 565Z" fill="#3b8b3b"/><path d="M1085.0 531.6V580" stroke="#3b8b3b" stroke-width="1.4" fill="none" /><path d="M1085.0 588.5L1078.4 565L1085.0 574L1091.6 565Z" fill="#3b8b3b"/><rect x="1147.7" y="588.2" width="113.3" height="53.4" fill="#adcdad"/><path d="M1147.7 588.3H1261" stroke="#2a2a2a" stroke-width="1.5" fill="none" /><path d="M1195.5 610.6H1212.7L1222.8 631.5Q1223.8 634.9 1220.5 634.9H1187.7Q1184.4 634.9 1185.4 631.5Z" fill="#000"/><circle cx="1204.1" cy="603.2" r="6" fill="none" stroke="#000" stroke-width="3.6"/></svg>
<div class="t" style="left:639.60px;top:486.82px;font-size:18.4px;color:#000;font-weight:bold;transform:scaleX(0.9102);transform-origin:0 0;">Art des Lastimpulses</div>
<div class="t" style="left:648.40px;top:672.14px;font-size:15px;color:#111;transform:scaleX(0.9443);transform-origin:0 0;">Flächenlasten</div>
<div class="t" style="left:811.50px;top:672.14px;font-size:15px;color:#111;transform:scaleX(0.9618);transform-origin:0 0;">Punktlasten</div>
<div class="t" style="left:973.40px;top:672.14px;font-size:15px;color:#111;">Kraftgruppe</div>
<div class="t" style="left:1136.20px;top:672.14px;font-size:15px;color:#111;transform:scaleX(0.9750);transform-origin:0 0;">Eigengewicht</div>
<svg style="left:0px;top:0px" width="1920" height="1149" viewBox="0 0 1920 1149" ><defs><filter id="sh" x="-20%" y="-20%" width="140%" height="140%"><feDropShadow dx="0" dy="1" stdDeviation="0.8" flood-color="#000" flood-opacity="0.35"/></filter></defs><rect x="1372.3" y="70.4" width="74.5" height="103.9" rx="4.5" fill="none" stroke="#ee3a40" stroke-width="3.9" filter="url(#sh)"/><rect x="1328.1" y="272.4" width="178.80000000000018" height="41.400000000000034" rx="4.5" fill="none" stroke="#ee3a40" stroke-width="3.9" filter="url(#sh)"/><rect x="1328.1" y="348.6" width="40.90000000000009" height="41.0" rx="4.5" fill="none" stroke="#ee3a40" stroke-width="3.9" filter="url(#sh)"/><rect x="800.4" y="508" width="156.60000000000002" height="187.70000000000005" rx="4.5" fill="none" stroke="#ee3a40" stroke-width="3.9" filter="url(#sh)"/><path d="M1409.5 192.6L1412.7 241.3L1405.5 239.0L1417.2 262.0L1424.5 237.2L1417.9 240.9L1412.1 192.4Z" fill="#ee3a40" filter="url(#sh)"/><path d="M1311.6 403.8L994.8 499.6L996.1 493.5L973.6 508.8L1000.8 508.8L996.4 504.5L1312.4 406.2Z" fill="#ee3a40" filter="url(#sh)"/><path d="M1500.5 572.5V588.4L1504.4 585.2L1507.2 590.6L1509.8 589.4L1507.3 584.2L1511.9 584Z" fill="#fff" stroke="#15151f" stroke-width="1.1" stroke-linejoin="round"/></svg>
</body></html>
